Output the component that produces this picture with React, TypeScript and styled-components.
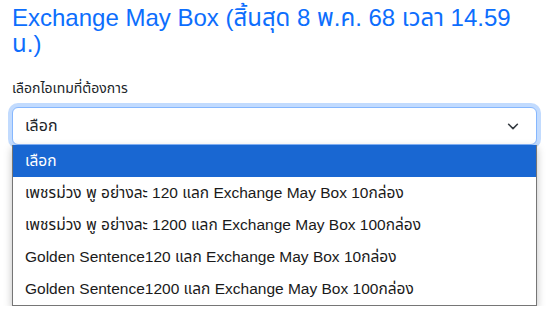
import * as React from "react";
import styled, { createGlobalStyle } from "styled-components";

const GlobalStyle = createGlobalStyle`
  html, body {
    margin: 0;
    padding: 0;
    background: #ffffff;
  }
  body {
    font-family: "Liberation Sans", "Noto Sans Thai", "Noto Sans", sans-serif;
    color: #212529;
  }
`;

const Page = styled.div`
  padding: 5px 9px 0 12px;
`;

const Title = styled.h3`
  margin: 0 0 21px;
  font-size: 24px;
  font-weight: 400;
  line-height: 26px;
  color: #0d6efd;
`;

const Label = styled.label`
  display: block;
  margin-bottom: 8px;
  font-size: 14px;
  line-height: 21px;
  color: #212529;
`;

const SelectWrap = styled.div`
  display: flex;
  flex-direction: column;
`;

const SelectBox = styled.div`
  box-sizing: border-box;
  height: 38px;
  display: flex;
  align-items: center;
  justify-content: space-between;
  padding: 0 16px 0 12px;
  border: 1px solid #86b7fe;
  border-radius: 6px;
  box-shadow: 0 0 0 4px rgba(13, 110, 253, 0.25);
  font-size: 16px;
  color: #212529;
  background: #fff;
`;

const Chevron = styled.svg`
  width: 14px;
  height: 14px;
  flex: none;
`;

const ListBox = styled.ul`
  position: relative;
  z-index: 1;
  margin: 0;
  padding: 0;
  list-style: none;
  background: #fff;
  border: 1px solid #767676;
  border-top: none;
  box-shadow: 0 3px 8px rgba(0, 0, 0, 0.25);
`;

const Option = styled.li<{ $active?: boolean }>`
  height: 32px;
  display: flex;
  align-items: center;
  padding: 1px 12px 0;
  box-sizing: border-box;
  font-size: 15.5px;
  color: ${(p) => (p.$active ? "#ffffff" : "#1a1a1a")};
  background: ${(p) => (p.$active ? "#1967d2" : "transparent")};
  white-space: nowrap;
`;

const options = [
  "เลือก",
  "เพชรม่วง พู อย่างละ 120 แลก Exchange May Box 10กล่อง",
  "เพชรม่วง พู อย่างละ 1200 แลก Exchange May Box 100กล่อง",
  "Golden Sentence120 แลก Exchange May Box 10กล่อง",
  "Golden Sentence1200 แลก Exchange May Box 100กล่อง",
];

export default function App() {
  return (
    <>
      <GlobalStyle />
      <Page>
        <Title>Exchange May Box (สิ้นสุด 8 พ.ค. 68 เวลา 14.59 น.)</Title>
        <Label>เลือกไอเทมที่ต้องการ</Label>
        <SelectWrap>
          <SelectBox>
            <span>เลือก</span>
            <Chevron viewBox="0 0 16 16">
              <path d="M3 6l5 5 5-5" fill="none" stroke="#343a40" strokeWidth="1.8" strokeLinecap="round" strokeLinejoin="round" />
            </Chevron>
          </SelectBox>
          <ListBox>
            {options.map((o, i) => (
              <Option key={o} $active={i === 0}>{o}</Option>
            ))}
          </ListBox>
        </SelectWrap>
      </Page>
    </>
  );
}
